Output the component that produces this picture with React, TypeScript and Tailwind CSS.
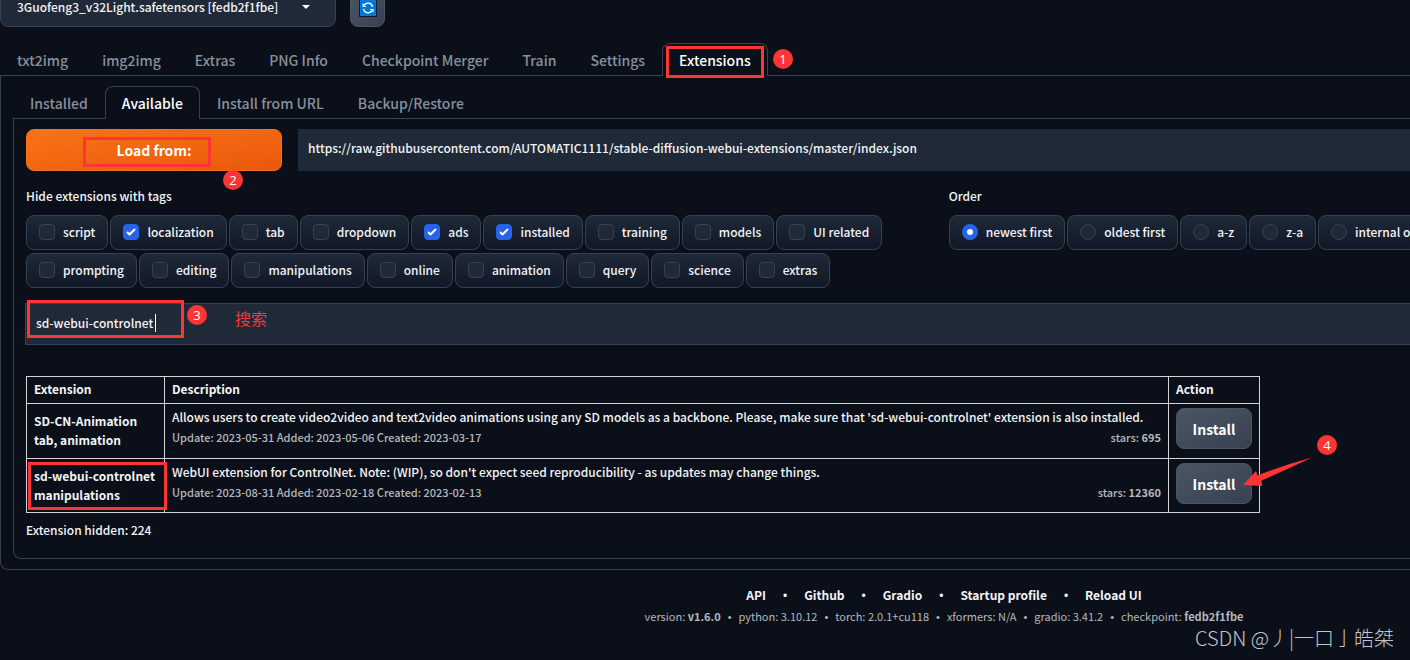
import type { ReactNode } from "react";

const MAIN_TABS = [
  "txt2img",
  "img2img",
  "Extras",
  "PNG Info",
  "Checkpoint Merger",
  "Train",
  "Settings",
  "Extensions",
];

const SUB_TABS = ["Installed", "Available", "Install from URL", "Backup/Restore"];

const TAGS = [
  { name: "script", checked: false },
  { name: "localization", checked: true },
  { name: "tab", checked: false },
  { name: "dropdown", checked: false },
  { name: "ads", checked: true },
  { name: "installed", checked: true },
  { name: "training", checked: false },
  { name: "models", checked: false },
  { name: "UI related", checked: false },
  { name: "prompting", checked: false },
  { name: "editing", checked: false },
  { name: "manipulations", checked: false },
  { name: "online", checked: false },
  { name: "animation", checked: false },
  { name: "query", checked: false },
  { name: "science", checked: false },
  { name: "extras", checked: false },
];

const ORDERS = ["newest first", "oldest first", "a-z", "z-a", "internal order"];

const EXTENSIONS = [
  {
    name: "SD-CN-Animation",
    tags: "tab, animation",
    description:
      "Allows users to create video2video and text2video animations using any SD models as a backbone. Please, make sure that 'sd-webui-controlnet' extension is also installed.",
    dates: "Update: 2023-05-31 Added: 2023-05-06 Created: 2023-03-17",
    stars: "695",
  },
  {
    name: "sd-webui-controlnet",
    tags: "manipulations",
    description:
      "WebUI extension for ControlNet. Note: (WIP), so don't expect seed reproducibility - as updates may change things.",
    dates: "Update: 2023-08-31 Added: 2023-02-18 Created: 2023-02-13",
    stars: "12360",
  },
];

const LINKS = ["API", "Github", "Gradio", "Startup profile", "Reload UI"];

const VERSIONS = [
  { label: "version:", value: "v1.6.0", strong: true },
  { label: "python:", value: "3.10.12", strong: false },
  { label: "torch:", value: "2.0.1+cu118", strong: false },
  { label: "xformers:", value: "N/A", strong: false },
  { label: "gradio:", value: "3.41.2", strong: false },
  { label: "checkpoint:", value: "fedb2f1fbe", strong: true },
];

function Tabs({ items, active }: { items: string[]; active: string }) {
  return (
    <div className="relative z-10 -mb-px flex" role="tablist">
      {items.map((item) => (
        <button
          key={item}
          type="button"
          role="tab"
          aria-selected={item === active}
          className={
            item === active
              ? "h-[33px] whitespace-nowrap rounded-t-lg border border-b-0 border-[#374151] bg-[#0b0f19] px-4 text-[14px] font-medium leading-5 text-white"
              : "h-[33px] whitespace-nowrap border border-b-0 border-transparent px-4 text-[14px] font-medium leading-5 text-[#87909d]"
          }
        >
          {item}
        </button>
      ))}
    </div>
  );
}

function Chip({ children }: { children: ReactNode }) {
  return (
    <label className="flex h-[35px] shrink-0 items-center gap-2 whitespace-nowrap rounded-lg border border-[#374151] bg-linear-to-b from-[#1f2937] to-[#111827] px-3 pb-px leading-5">
      {children}
    </label>
  );
}

function TagCheckbox({ name, checked }: { name: string; checked: boolean }) {
  return (
    <Chip>
      <span className="grid size-4 place-items-center">
        <input
          type="checkbox"
          defaultChecked={checked}
          className="peer col-start-1 row-start-1 size-4 appearance-none rounded border border-[#374151] bg-[#1f2937] checked:border-[#2563eb] checked:bg-[#2563eb]"
        />
        <svg
          viewBox="0 0 16 16"
          className="pointer-events-none col-start-1 row-start-1 hidden size-4 fill-white peer-checked:block"
        >
          <path d="M12.207 4.793a1 1 0 010 1.414l-5 5a1 1 0 01-1.414 0l-2-2a1 1 0 011.414-1.414L6.5 9.086l4.293-4.293a1 1 0 011.414 0z" />
        </svg>
      </span>
      <span>{name}</span>
    </Chip>
  );
}

function InstallButton() {
  return (
    <button
      type="button"
      className="block h-[41px] w-[76px] rounded-lg border border-[#4b5563] bg-linear-to-br from-[#4b5563] to-[#374151] text-[14px] font-bold leading-5 text-white"
    >
      Install
    </button>
  );
}

function Step({ n, className }: { n: number; className: string }) {
  return (
    <span
      className={`absolute z-20 flex size-5 items-center justify-center rounded-full bg-[#fd3535] font-['Open_Sans',sans-serif] text-[13px] leading-none text-white ${className}`}
    >
      {n}
    </span>
  );
}

function Frame({ className }: { className: string }) {
  return <span className={`pointer-events-none absolute z-20 border-3 border-[#fd3535] ${className}`} />;
}

export default function App() {
  return (
    <div className="relative min-h-screen overflow-hidden bg-[#0b0f19] font-['Noto_Sans_CJK_SC',sans-serif] text-[12px] font-medium text-[#f3f4f6]">
      <header className="-mt-[13px] flex gap-[14px]">
        <div className="relative">
          <select
            aria-label="Stable Diffusion checkpoint"
            className="block h-10 w-[336px] appearance-none rounded-lg border border-[#374151] bg-[#1f2937] px-4"
          >
            <option>3Guofeng3_v32Light.safetensors [fedb2f1fbe]</option>
          </select>
          <svg viewBox="0 0 8 4" className="pointer-events-none absolute top-[18px] right-[26px] h-1 w-2 fill-white">
            <path d="M0 0h8L4 4z" />
          </svg>
        </div>
        <button
          type="button"
          aria-label="Refresh checkpoints"
          className="flex h-10 w-[35px] items-center justify-center rounded-lg border border-[#4b5563] bg-linear-to-br from-[#4b5563] to-[#374151] pt-0.5"
        >
          <svg viewBox="0 0 18 18" className="size-[18px]">
            <path d="M0 0h18v18H0z" fill="#111827" />
            <path d="M1 1h16v16H1z" fill="#0078d7" />
            <g fill="none" stroke="#fff" strokeWidth="1.300">
              <path d="M4.500 10a4.600 4.600 0 0 0 8.200 2" />
              <path d="M13.600 8a4.600 4.600 0 0 0-8.300-2" />
              <path d="M4.200 4.700v2.600h2.700M13.900 13.300v-2.600h-2.700" />
            </g>
          </svg>
        </button>
      </header>

      <main className="mt-4">
        <Tabs items={MAIN_TABS} active="Extensions" />
        <section className="rounded-bl-lg border border-r-0 border-[#374151] pt-[10px] pb-[10px] pl-3">
          <Tabs items={SUB_TABS} active="Available" />
          <div className="rounded-bl-lg border border-r-0 border-[#374151] pt-[10px] pb-[18px] pl-3">
            <div className="flex gap-4">
              <button
                type="button"
                className="h-[42px] w-64 shrink-0 rounded-lg border border-[#f97316] bg-linear-to-br from-[#f97316] to-[#ea580c] text-[14px] font-bold leading-5 text-white"
              >
                Load from:
              </button>
              <input
                type="text"
                aria-label="Extension index URL"
                defaultValue="https://raw.githubusercontent.com/AUTOMATIC1111/stable-diffusion-webui-extensions/master/index.json"
                className="h-[42px] min-w-0 grow bg-[#1f2937] px-[10px] pb-1.5"
              />
            </div>

            <div className="mt-4 grid grid-cols-[minmax(0,2fr)_minmax(0,1fr)]">
              <fieldset>
                <legend className="mb-[10px] leading-[18px]">Hide extensions with tags</legend>
                <div className="flex flex-wrap gap-x-0.5 gap-y-[3px]">
                  {TAGS.map((tag) => (
                    <TagCheckbox key={tag.name} name={tag.name} checked={tag.checked} />
                  ))}
                </div>
              </fieldset>
              <fieldset>
                <legend className="mb-[10px] leading-[18px]">Order</legend>
                <div className="flex gap-0.5">
                  {ORDERS.map((order, i) => (
                    <Chip key={order}>
                      <input
                        type="radio"
                        name="order"
                        defaultChecked={i === 0}
                        className="size-4 appearance-none rounded-full border border-[#374151] bg-[#1f2937] checked:border-5 checked:border-[#2563eb] checked:bg-white"
                      />
                      <span>{order}</span>
                    </Chip>
                  ))}
                </div>
              </fieldset>
            </div>

            <div className="relative mt-[15px] -ml-px">
              <input
                type="text"
                aria-label="Search"
                defaultValue="sd-webui-controlnet"
                className="block h-[42px] w-full border border-r-0 border-[#374151] bg-[#1f2937] px-[10px] pb-1"
              />
              <span className="absolute top-[11px] left-[130px] h-[18px] w-px bg-white" />
            </div>

            <table className="mt-[31px] border-collapse whitespace-nowrap leading-5">
              <thead>
                <tr className="text-left [&>th]:h-[27px] [&>th]:border [&>th]:border-[#d4d4d4] [&>th]:px-[7px] [&>th]:pb-0.5 [&>th]:font-bold">
                  <th className="min-w-[138px]">Extension</th>
                  <th className="min-w-[1004px]">Description</th>
                  <th>Action</th>
                </tr>
              </thead>
              <tbody>
                {EXTENSIONS.map((ext) => (
                  <tr
                    key={ext.name}
                    className="[&>td]:h-[54px] [&>td]:border [&>td]:border-[#d4d4d4] [&>td]:px-[7px] [&>td]:align-top first:[&>td]:h-[55px]"
                  >
                    <td className="pt-[7px] font-bold leading-[19px]">
                      <a href="#">{ext.name}</a>
                      <br />
                      {ext.tags}
                    </td>
                    <td className="pt-[3px]">
                      {ext.description}
                      <p className="flex justify-between text-[11px] text-[#b6b8bc]">
                        <span>{ext.dates}</span>
                        <span>
                          stars: <b>{ext.stars}</b>
                        </span>
                      </p>
                    </td>
                    <td className="pt-1">
                      <InstallButton />
                    </td>
                  </tr>
                ))}
              </tbody>
            </table>
            <p className="mt-[7px] leading-5">Extension hidden: 224</p>
          </div>
        </section>
      </main>

      <footer className="mt-[15px] pl-[478px]">
        <nav className="flex justify-center font-bold leading-5">
          {LINKS.map((link, i) => (
            <span key={link}>
              {i > 0 && <span className="px-[17px] font-['Liberation_Sans',sans-serif] font-normal">•</span>}
              <a href="#">{link}</a>
            </span>
          ))}
        </nav>
        <div className="flex justify-center text-[11px] font-normal leading-5 text-[#b6b8bc]">
          {VERSIONS.map((v, i) => (
            <span key={v.label}>
              {i > 0 && <span className="px-[7px] font-['Liberation_Sans',sans-serif]">•</span>}
              {v.label} {v.strong ? <b>{v.value}</b> : v.value}
            </span>
          ))}
        </div>
      </footer>

      {/* walkthrough marks */}
      <Frame className="top-[46px] left-[666px] h-8 w-[98px]" />
      <Step n={1} className="top-[49px] left-[773px]" />
      <Frame className="top-[137px] left-[83px] h-[30px] w-32" />
      <Step n={2} className="top-[170px] left-[223px]" />
      <Frame className="top-[300px] left-[27px] h-[38px] w-[157px]" />
      <Step n={3} className="top-[305px] left-[187px]" />
      <span className="absolute top-[308px] left-[235px] text-[16px] font-normal leading-5 text-[#fd3535]">搜索</span>
      <Frame className="top-[462px] left-7 h-12 w-[139px]" />
      <Step n={4} className="top-[435px] left-[1317px]" />
      <svg viewBox="0 0 70 32" className="absolute top-[456px] left-[1243px] z-20 h-8 w-[70px] fill-[#fd3535]">
        <path d="M0 29 13 15l1.500 4.500Q41 9 69 1.500 43 14 18.500 24.500l.5 5.500z" />
      </svg>
      <span className="absolute right-4 bottom-2 text-[20px] font-light leading-7 text-[#c4c7ca]">
        CSDN @丿|一口亅皓桀
      </span>
    </div>
  );
}
